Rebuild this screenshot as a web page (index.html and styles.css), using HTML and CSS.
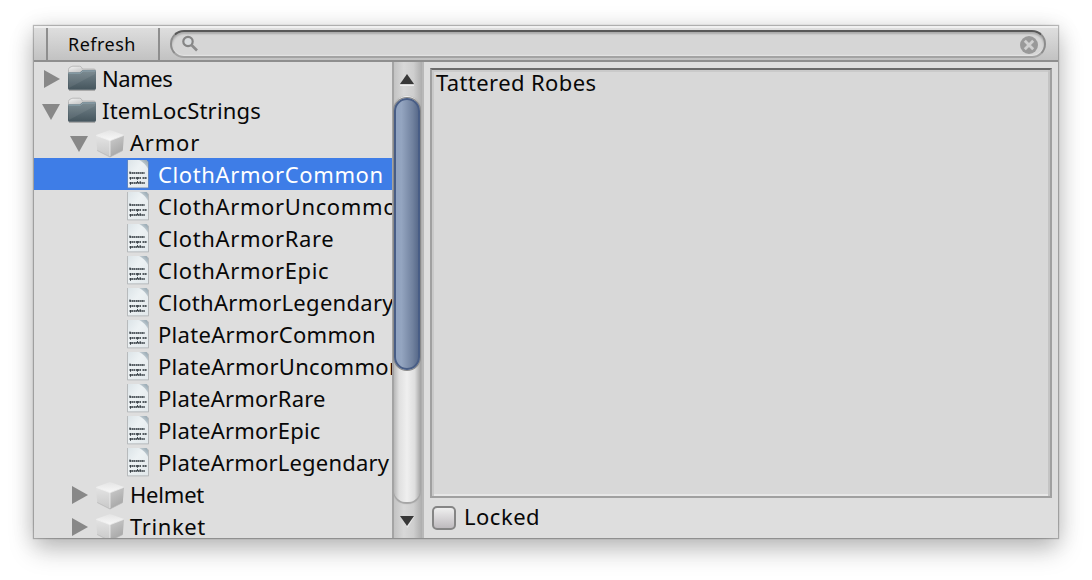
FILE: index.html
```html
<!DOCTYPE html>
<html lang="en">
<head>
<meta charset="utf-8">
<title>Localization Strings</title>
<link rel="stylesheet" href="styles.css">
</head>
<body>
<svg class="defs" width="0" height="0" aria-hidden="true">
  <defs>
    <linearGradient id="gFolder" x1="0" y1="0" x2="0" y2="1"><stop offset="0" stop-color="#75858c"/><stop offset="1" stop-color="#45555d"/></linearGradient>
    <linearGradient id="gTab" x1="0" y1="0" x2="1" y2="1"><stop offset="0" stop-color="#f4f4f4"/><stop offset="1" stop-color="#a8a8a8"/></linearGradient>
    <linearGradient id="gTop" x1="0" y1="0" x2="0" y2="1"><stop offset="0" stop-color="#e4e4e4"/><stop offset="1" stop-color="#f8f8f8"/></linearGradient>
    <linearGradient id="gLeft" x1="0" y1="0" x2="0" y2="1"><stop offset="0" stop-color="#e4e4e4"/><stop offset="1" stop-color="#c8c8c8"/></linearGradient>
    <linearGradient id="gRight" x1="0" y1="0" x2="0.4" y2="1"><stop offset="0" stop-color="#cecece"/><stop offset="1" stop-color="#a6a6a6"/></linearGradient>
    <linearGradient id="gDoc" x1="0" y1="0" x2="1" y2="1"><stop offset="0" stop-color="#dce4e8"/><stop offset="0.4" stop-color="#edf2f4"/><stop offset="1" stop-color="#e2e8eb"/></linearGradient>
    <linearGradient id="gCurl" x1="0" y1="1" x2="1" y2="0"><stop offset="0.3" stop-color="#f6fafb"/><stop offset="0.6" stop-color="#b9c5cc"/><stop offset="1" stop-color="#8da0ab"/></linearGradient>
    <symbol id="folder" viewBox="0 0 32 32">
      <path d="M3 28.3h26" stroke="#aaa" stroke-width="1.4"/>
      <path d="M2.5 12V7.5Q2.5 6 4 5.3L5.3 4.7Q6 4.2 7 4.2H13.5Q15 4.2 15.6 5.6L16.5 7H28Q29.5 7 29.5 9V12Z" fill="url(#gTab)" stroke="#adadad" stroke-width=".8"/>
      <path d="M2 11.5Q2 10.3 3.3 10.3H14L16.6 8H29Q30 8 30 9.5V26.2Q30 27.8 28.4 27.8H3.6Q2 27.8 2 26.2Z" fill="url(#gFolder)"/>
      <path d="M2.5 11.2H14.5L17 9H29.5" fill="none" stroke="#8fa5b0" stroke-width="1"/>
      <path d="M3 26L29 12V9.5H17L14.5 12H3Z" fill="#fff" opacity=".07"/>
    </symbol>
    <symbol id="cube" viewBox="0 0 32 32">
      <path d="M2 9L16 13.5V31L3.2 24.5Z" fill="url(#gLeft)"/>
      <path d="M30 9L16 13.5V31L28.8 24.5Z" fill="url(#gRight)"/>
      <path d="M16 4L30 9L16 14.5L2 9Z" fill="url(#gTop)"/>
      <path d="M2.3 9.4L16 14.7L29.7 9.4M16 14.7V30" fill="none" stroke="#f4f4f4" stroke-width=".7"/>
      <path d="M3.2 24.5L16 31L28.8 24.5" fill="none" stroke="#b4b4b4" stroke-width=".7"/>
    </symbol>
    <symbol id="doc" viewBox="0 0 32 32">
      <path d="M5.3 2H24.5L26.7 4V30.3H5.3Z" fill="#888f94" opacity=".65"/>
      <path d="M6 2H24L26 4.5V29.4H6Z" fill="url(#gDoc)"/>
      <path d="M17 2H24.5L26 4.5V11Q23 5 17 2Z" fill="url(#gCurl)"/>
      <g stroke="#30383e" fill="none" stroke-width="1.9" opacity=".8">
        <path d="M7.5 15H22.8" stroke-dasharray="1.9 .5 1.4 .3"/>
        <path d="M7.5 20H13M13.7 20H19M20.5 20H25" stroke-dasharray="1.6 .4"/>
        <path d="M7.5 25H22.8" stroke-dasharray="1.4 .3 2 .5"/>
      </g>
      <path d="M8 13.4V15.5M8.5 19V21.8M15.4 19V21.8M8.5 24V26.8M15.5 23V25M18.2 23V25" stroke="#30383e" stroke-width=".9"/>
    </symbol>
    <symbol id="closed" viewBox="0 0 32 32"><path d="M10 8L26 17L10 26Z" fill="#888"/></symbol>
    <symbol id="open" viewBox="0 0 32 32"><path d="M8 10H26L17 26Z" fill="#888"/></symbol>
  </defs>
</svg>
<div class="window">
  <header class="toolbar">
    <button class="refresh">Refresh</button>
    <div class="search">
      <svg width="20" height="20" viewBox="0 0 20 20"><circle cx="7" cy="7.5" r="4.7" fill="#d9dcde" stroke="#858585" stroke-width="2.2"/><path d="M10.5 11L16 16.5" stroke="#8c8c8c" stroke-width="2.6"/></svg>
      <svg class="clear" width="18" height="18" viewBox="0 0 18 18"><circle cx="9" cy="9" r="9" fill="#999"/><path d="M4.8 4.8L13.2 13.2M13.2 4.8L4.8 13.2" stroke="#d0d0d0" stroke-width="2.8"/></svg>
    </div>
  </header>
  <main class="content">
    <ul class="tree">
      <li class="row"><svg class="fold"><use href="#closed"/></svg><svg class="icon"><use href="#folder"/></svg><span class="label tightest">Names</span></li>
      <li class="row"><svg class="fold"><use href="#open"/></svg><svg class="icon"><use href="#folder"/></svg><span class="label tight">ItemLocStrings</span></li>
      <li class="row child"><svg class="fold"><use href="#open"/></svg><svg class="icon"><use href="#cube"/></svg><span class="label wide">Armor</span></li>
      <li class="row leaf selected"><svg class="icon"><use href="#doc"/></svg><span class="label">ClothArmorCommon</span></li>
      <li class="row leaf"><svg class="icon"><use href="#doc"/></svg><span class="label">ClothArmorUncommon</span></li>
      <li class="row leaf"><svg class="icon"><use href="#doc"/></svg><span class="label">ClothArmorRare</span></li>
      <li class="row leaf"><svg class="icon"><use href="#doc"/></svg><span class="label">ClothArmorEpic</span></li>
      <li class="row leaf"><svg class="icon"><use href="#doc"/></svg><span class="label snug">ClothArmorLegendary</span></li>
      <li class="row leaf"><svg class="icon"><use href="#doc"/></svg><span class="label snug">PlateArmorCommon</span></li>
      <li class="row leaf"><svg class="icon"><use href="#doc"/></svg><span class="label snug">PlateArmorUncommon</span></li>
      <li class="row leaf"><svg class="icon"><use href="#doc"/></svg><span class="label tight">PlateArmorRare</span></li>
      <li class="row leaf"><svg class="icon"><use href="#doc"/></svg><span class="label tight">PlateArmorEpic</span></li>
      <li class="row leaf"><svg class="icon"><use href="#doc"/></svg><span class="label tight">PlateArmorLegendary</span></li>
      <li class="row child"><svg class="fold"><use href="#closed"/></svg><svg class="icon"><use href="#cube"/></svg><span class="label tighter">Helmet</span></li>
      <li class="row child"><svg class="fold"><use href="#closed"/></svg><svg class="icon"><use href="#cube"/></svg><span class="label">Trinket</span></li>
    </ul>
    <div class="scrollbar">
      <svg class="arrow" viewBox="0 0 28 34"><path d="M6 23.5H20" stroke="#eee"/><path d="M13 12L20 22H6Z" fill="#383838"/></svg>
      <div class="track"><div class="thumb"></div></div>
      <svg class="arrow" viewBox="0 0 28 34"><path d="M6.5 12.5H20.5L13.5 24Z" fill="#e8e8e8"/><path d="M6 12H20L13 22Z" fill="#383838"/></svg>
    </div>
    <section class="detail">
      <div class="textarea">Tattered Robes</div>
      <label class="locked"><span class="box"></span><span class="label">Locked</span></label>
    </section>
  </main>
</div>
</body>
</html>
```
FILE: styles.css
```css
* { box-sizing: border-box; }
body {
  margin: 0;
  padding: 26px 34px 42px;
  height: 580px;
  overflow: hidden;
  background: #fff;
  color: #080808;
  font: 22px/32px "Noto Sans", "Open Sans", sans-serif;
}
.defs { position: absolute; }
.window {
  height: 512px;
  display: flex;
  flex-direction: column;
  background: #dedede;
  box-shadow: 0 0 1px 1px rgba(0,0,0,.25), 0 12px 24px rgba(0,0,0,.22), 0 2px 22px rgba(0,0,0,.14);
}
.toolbar {
  height: 36px;
  flex: none;
  display: flex;
  padding: 2px 12px 0;
  border-bottom: 2px solid #8e8e8e;
  background: linear-gradient(#f0f0f0 0 2px, #dedede 2px, #c2c2c2);
}
.refresh {
  width: 114px;
  height: 32px;
  margin: 0 10px 0 0;
  padding: 0 2px 0 0;
  border: solid #8e8e8e;
  border-width: 0 2px;
  background: none;
  color: #080808;
  font: 18px/32px "Noto Sans", "Open Sans", sans-serif;
  letter-spacing: .5px;
}
.search {
  flex: 1;
  height: 28px;
  margin-top: 2px;
  padding: 0 6px 0 9px;
  display: flex;
  align-items: center;
  justify-content: space-between;
  border: 2px solid #8c8c8c;
  border-top-color: #585858;
  border-bottom-color: #a3a3a3;
  border-radius: 14px;
  background: #d6d6d6;
  box-shadow: inset 0 2px 2px #aaa, inset 0 -1px 1px #e4e4e4;
}
.clear { margin-top: 2px; }
.content { flex: 1; min-height: 0; display: flex; }
.tree {
  width: 358px;
  margin: 0;
  padding: 0;
  list-style: none;
  overflow: hidden;
}
.row { height: 32px; display: flex; white-space: nowrap; }
.fold, .icon { width: 32px; height: 32px; flex: none; }
.label { padding-left: 4px; letter-spacing: .62px; line-height: 32px; }
.wide { letter-spacing: .8px; }
.snug { letter-spacing: .3px; }
.tight { letter-spacing: .2px; }
.tighter { letter-spacing: -.2px; }
.tightest { letter-spacing: -.45px; }
.child { padding-left: 28px; }
.leaf { padding-left: 88px; }
.selected { background: #3e7de7; color: #fff; }
.scrollbar {
  width: 32px;
  display: flex;
  flex-direction: column;
  border-left: 2px solid #a4a4a4;
  border-right: 2px solid #b8b8b8;
  background: linear-gradient(90deg, #c3c3c3, #d8d8d8 35%, #cecece 70%, #adadad);
}
.arrow { width: 28px; height: 34px; flex: none; }
.track {
  flex: 1;
  width: 26px;
  margin-bottom: 2px;
  padding-top: 2px;
  border-radius: 14px 14px 13px 13px;
  background: linear-gradient(90deg, #b8b8b8, #e0e0e0 20%, #efefef 50%, #dedede 80%, #aaa);
  box-shadow: 0 1px 1px 1px #a5a5a5;
}
.thumb {
  height: 272px;
  border: 2px solid #485d85;
  border-radius: 13px;
  background: linear-gradient(90deg, #8fa2c0, #94a5c0 25%, #71829f 75%, #596b8b);
  box-shadow: 0 0 0 1px #898989;
}
.detail { flex: 1; padding: 6px 6px 0; display: flex; flex-direction: column; }
.textarea {
  height: 430px;
  padding: 0 4px;
  border: 2px solid #a0a0a0;
  border-top-color: #6b6b6b;
  background: #d8d8d8;
  box-shadow: inset 2px 0 #c9c9c9, inset -2px 0 #c4c4c4, inset 0 2px #cacaca, inset 0 -2px #e7e7e7;
  line-height: 25px;
  letter-spacing: .4px;
}
.locked { display: flex; align-items: center; height: 40px; padding-left: 2px; }
.box {
  width: 24px;
  height: 24px;
  border: 2px solid #858585;
  border-radius: 5px;
  background: linear-gradient(#efefef, #bebabe);
}
.locked .label { padding-left: 8px; line-height: 28px; margin-top: -4px; letter-spacing: .5px; }
```
